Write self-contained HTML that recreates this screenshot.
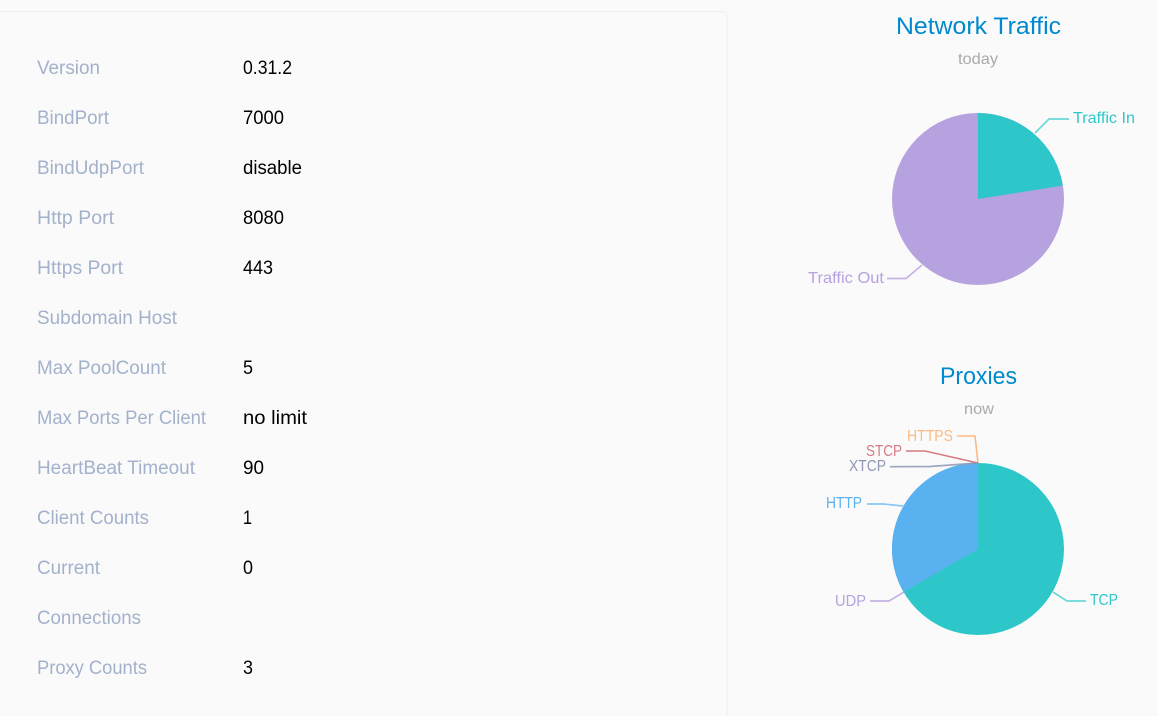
<!DOCTYPE html>
<html lang="en">
<head>
<meta charset="utf-8">
<title>Dashboard</title>
<style>
html,body{margin:0;padding:0;width:1158px;height:716px;overflow:hidden;background:#fafafb}
svg{position:absolute;left:0;top:0;display:block}
text{font-family:"Liberation Sans","Noto Sans CJK SC",sans-serif}
.k{font-size:19px;fill:#a3b1cb}
.v{font-size:19px;fill:#000}
.l{font-size:16px}
</style>
</head>
<body>
<svg width="1158" height="716" viewBox="0 0 1158 716" xmlns="http://www.w3.org/2000/svg">
<rect width="1158" height="716" fill="#fafafb"/>
<path d="M-5 11.5H723a4 4 0 0 1 4 4V720" fill="none" stroke="#eeeff6" stroke-width="1"/>

<text class="k" x="37" y="74" textLength="63" lengthAdjust="spacingAndGlyphs">Version</text>
<text class="k" x="37" y="124" textLength="72" lengthAdjust="spacingAndGlyphs">BindPort</text>
<text class="k" x="37" y="174" textLength="107" lengthAdjust="spacingAndGlyphs">BindUdpPort</text>
<text class="k" x="37" y="224" textLength="77" lengthAdjust="spacingAndGlyphs">Http Port</text>
<text class="k" x="37" y="274" textLength="86" lengthAdjust="spacingAndGlyphs">Https Port</text>
<text class="k" x="37" y="324" textLength="140" lengthAdjust="spacingAndGlyphs">Subdomain Host</text>
<text class="k" x="37" y="374" textLength="129" lengthAdjust="spacingAndGlyphs">Max PoolCount</text>
<text class="k" x="37" y="424" textLength="169" lengthAdjust="spacingAndGlyphs">Max Ports Per Client</text>
<text class="k" x="37" y="474" textLength="158" lengthAdjust="spacingAndGlyphs">HeartBeat Timeout</text>
<text class="k" x="37" y="524" textLength="112" lengthAdjust="spacingAndGlyphs">Client Counts</text>
<text class="k" x="37" y="574" textLength="63" lengthAdjust="spacingAndGlyphs">Current</text>
<text class="k" x="37" y="624" textLength="104" lengthAdjust="spacingAndGlyphs">Connections</text>
<text class="k" x="37" y="674" textLength="110" lengthAdjust="spacingAndGlyphs">Proxy Counts</text>

<text class="v" x="243" y="74" textLength="49" lengthAdjust="spacingAndGlyphs">0.31.2</text>
<text class="v" x="243" y="124" textLength="41" lengthAdjust="spacingAndGlyphs">7000</text>
<text class="v" x="243" y="174" textLength="59" lengthAdjust="spacingAndGlyphs">disable</text>
<text class="v" x="243" y="224" textLength="41" lengthAdjust="spacingAndGlyphs">8080</text>
<text class="v" x="243" y="274" textLength="30" lengthAdjust="spacingAndGlyphs">443</text>
<text class="v" x="243" y="374" textLength="10" lengthAdjust="spacingAndGlyphs">5</text>
<text class="v" x="243" y="424" textLength="64" lengthAdjust="spacingAndGlyphs">no limit</text>
<text class="v" x="243" y="474" textLength="21" lengthAdjust="spacingAndGlyphs">90</text>
<text class="v" x="243" y="524" textLength="9" lengthAdjust="spacingAndGlyphs">1</text>
<text class="v" x="243" y="574" textLength="10" lengthAdjust="spacingAndGlyphs">0</text>
<text class="v" x="243" y="674" textLength="10" lengthAdjust="spacingAndGlyphs">3</text>

<!-- Network Traffic -->
<text x="896" y="34" font-size="24" fill="#008acd" textLength="165" lengthAdjust="spacingAndGlyphs">Network Traffic</text>
<text x="958" y="64" font-size="16" fill="#aaaaaa" textLength="40" lengthAdjust="spacingAndGlyphs">today</text>
<circle cx="978" cy="199" r="86" fill="#b6a2de"/>
<path d="M978 199V113A86 86 0 0 1 1062.8 185.6Z" fill="#2ec7c9"/>
<path d="M1035 133L1049 119H1069" fill="none" stroke="#2ec7c9" stroke-width="1.7" opacity=".7"/>
<path d="M922 265L906 278.5H887" fill="none" stroke="#b6a2de" stroke-width="1.7" opacity=".8"/>
<text class="l" x="1073" y="123" fill="#2ec7c9" textLength="62" lengthAdjust="spacingAndGlyphs">Traffic In</text>
<text class="l" x="808" y="283" fill="#b6a2de" textLength="76" lengthAdjust="spacingAndGlyphs">Traffic Out</text>

<!-- Proxies -->
<text x="940" y="384" font-size="24" fill="#008acd" textLength="77" lengthAdjust="spacingAndGlyphs">Proxies</text>
<text x="964" y="414" font-size="16" fill="#aaaaaa" textLength="30" lengthAdjust="spacingAndGlyphs">now</text>
<circle cx="978" cy="549" r="86" fill="#2ec7c9"/>
<path d="M978 549L903.5 592A86 86 0 0 1 978 463Z" fill="#5ab1ef"/>
<path d="M957 436H975L978 463" fill="none" stroke="#ffb980" stroke-width="1.6"/>
<path d="M906 451H925L978 463" fill="none" stroke="#d87a80" stroke-width="1.6"/>
<path d="M890 466.7L930 466.5L978 463" fill="none" stroke="#8d98b3" stroke-width="1.7" opacity=".85"/>
<path d="M867 504H883L903 506" fill="none" stroke="#5ab1ef" stroke-width="1.7" opacity=".7"/>
<path d="M870 601H889L904 592" fill="none" stroke="#b6a2de" stroke-width="1.7" opacity=".8"/>
<path d="M1053 592L1067 601H1086" fill="none" stroke="#2ec7c9" stroke-width="1.7" opacity=".7"/>
<text class="l" x="907" y="441" fill="#ffb980" textLength="46" lengthAdjust="spacingAndGlyphs">HTTPS</text>
<text class="l" x="866" y="456" fill="#d87a80" textLength="36" lengthAdjust="spacingAndGlyphs">STCP</text>
<text class="l" x="849" y="471" fill="#8d98b3" textLength="37" lengthAdjust="spacingAndGlyphs">XTCP</text>
<text class="l" x="826" y="508" fill="#5ab1ef" textLength="36" lengthAdjust="spacingAndGlyphs">HTTP</text>
<text class="l" x="835" y="606" fill="#b6a2de" textLength="31" lengthAdjust="spacingAndGlyphs">UDP</text>
<text class="l" x="1090" y="605" fill="#2ec7c9" textLength="28" lengthAdjust="spacingAndGlyphs">TCP</text>
</svg>
</body>
</html>
